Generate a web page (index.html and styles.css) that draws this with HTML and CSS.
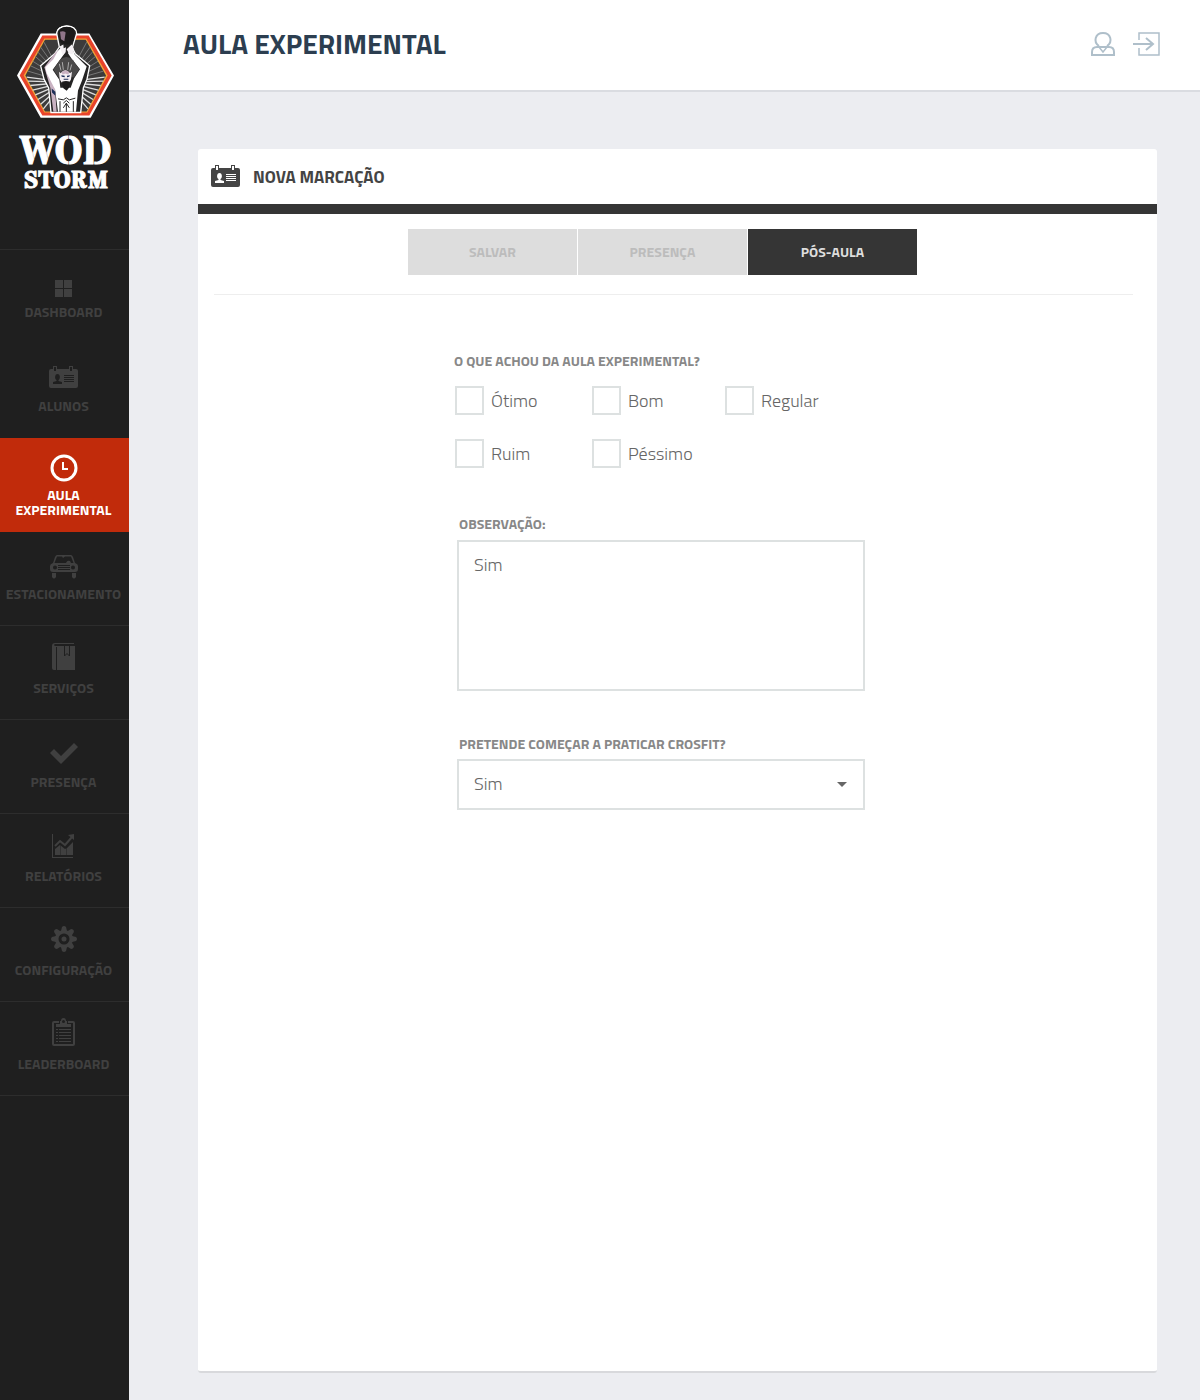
FILE: index.html
```html
<!DOCTYPE html>
<html lang="pt-BR">
<head>
<meta charset="utf-8">
<meta name="viewport" content="width=device-width, initial-scale=1">
<title>Aula Experimental - WOD Storm</title>
<link rel="stylesheet" href="styles.css">
</head>
<body>
<svg class="sprite" aria-hidden="true">
  <symbol id="badge" viewBox="0 0 29 22">
    <path fill="currentColor" fill-rule="evenodd" d="M2 3H4V0H8V3H20V0H24V3H27Q29 3 29 5V20Q29 22 27 22H2Q0 22 0 20V5Q0 3 2 3ZM5 1V5H7V1ZM21 1V5H23V1ZM8.500 8C5.500 8 5.500 13 7.500 14V15L4 16V18H13V16L9.500 15V14C11.500 13 11.500 8 8.500 8ZM15 9V10H25V9ZM15 11V12H25V11ZM15 13V14H25V13ZM15 15V16H25V15Z"/>
  </symbol>
</svg>
<div class="app">
  <aside class="sidebar">
    <a class="brand" href="#" aria-label="WOD Storm">
      <svg class="emblem" viewBox="51 44 291 278" width="97" height="93" aria-hidden="true">
        <path fill="#fff" d="M122 69H168Q170 46 200 44Q230 46 230 69H268L342 195L272 322H122L51 195Z"/>
        <path fill="#e8432b" d="M127 75H266L335 195L268 315H127L59 195Z"/>
        <path fill="#f3a536" d="M133 84H259L323 195L262 306H133L71 195Z"/>
        <path fill="#3c3b3b" d="M135 88H257L318 195L260 303H135L76 195Z"/>
        <g stroke="#777" stroke-width="3">
          <path d="M196 215L84 182M196 215L92 166M196 215L98 152M196 215L106 138M196 215L113 124M196 215L122 110M196 215L132 95M196 215L310 182M196 215L302 166M196 215L294 152M196 215L286 138M196 215L278 124M196 215L270 110M196 215L260 95"/>
          <path stroke="#ddd" stroke-width="4" d="M196 215L80 200M196 215L84 212M196 215L91 225M196 215L98 239M196 215L106 253M196 215L114 267M196 215L122 281M196 215L130 295M196 215L314 200M196 215L310 212M196 215L302 225M196 215L295 239M196 215L287 253M196 215L279 267M196 215L272 281M196 215L264 295"/>
        </g>
        <path fill="#252424" stroke="#fff" stroke-width="4" d="M164 130L122 166L132 206L146 232L153 306H242L250 232L261 206L269 166L226 130L217 112L230 69Q228 47 200 47Q172 49 170 69L178 110Z"/>
        <path fill="#c9b2c2" d="M166 126L186 112L190 130L172 150L152 180L163 210L170 304H160L151 232L133 170Z"/>
        <path fill="#fff" d="M172 124L186 108L194 128L180 148L158 178L178 208L181 232H212L222 204L240 176L216 146L204 128L216 110L224 132L260 168L246 210L234 240L228 304H174L165 236L140 188L136 170L160 146Z"/>
        <path fill="#4a4949" d="M180 148Q200 130 219 149L238 176L222 200H176L160 178Z"/>
        <path stroke="#ddd" stroke-width="2" d="M183 180L178 160M190 178L187 155M203 178L206 155M210 180L215 162"/>
        <path fill="#f4eff2" d="M177 184L182 188Q196 170 210 188L216 184L213 206L208 216H185L179 206Z"/>
        <path fill="#c9b2c2" d="M184 186Q197 174 208 186L205 192L196 189L188 192Z"/>
        <path fill="#1c2f58" d="M184 194L194 196V200L185 199ZM201 196L210 194L208 199L201 200ZM191 205H205V208H191ZM155 234L166 244L166 256L156 246Z"/>
        <path fill="#1b1a1a" d="M186 214Q198 209 210 214L207 232L200 241L190 233ZM177 66Q178 50 200 49Q223 50 224 66L221 90L209 102H188L180 94Z"/>
        <path fill="#8f7589" d="M180 64Q190 60 197 66L193 92L183 86Z"/>
        <path fill="#f4f0f3" d="M179 108L190 102L191 113L198 110L197 125L188 134ZM208 109L215 102L221 113L218 132L206 128L200 116Z"/>
        <path fill="none" stroke="#252424" stroke-width="3" d="M174 265L190 268L199 262L208 268L226 263M190 278L199 270L208 278M190 292L199 278L208 292M199 278V304M180 272V304M220 272V304"/>
      </svg>
      <svg class="wordmark" viewBox="0 0 97 58" width="97" height="58" aria-hidden="true">
        <text class="word-top" x="49" y="32" text-anchor="middle">WOD</text>
        <text class="word-bottom" x="49" y="56" text-anchor="middle">STORM</text>
      </svg>
    </a>
    <nav class="menu">
      <a href="#" class="item plain low"><span class="icon"><svg width="17" height="17" viewBox="0 0 17 17"><path fill="currentColor" d="M0 0H8V8H0ZM9 0H17V8H9ZM0 9H8V17H0ZM9 9H17V17H9Z"/></svg></span>DASHBOARD</a>
      <a href="#" class="item plain"><span class="icon"><svg width="29" height="22"><use href="#badge"/></svg></span>ALUNOS</a>
      <a href="#" class="item active" aria-current="page"><span class="icon"><svg width="28" height="28" viewBox="0 0 28 28"><g fill="none" stroke="currentColor" stroke-width="3"><circle cx="14" cy="14" r="12"/><path stroke-width="2" d="M13 8V15H18"/></g></svg></span>AULA EXPERIMENTAL</a>
      <a href="#" class="item low"><span class="icon"><svg width="28" height="24" viewBox="0 0 28 24"><path fill="currentColor" fill-rule="evenodd" d="M7 0H21Q22 0 23 2L25 8Q28 9 28 11V14Q28 17 25 17H3Q0 17 0 14V11Q0 9 3 8L5 2Q6 0 7 0ZM7 1.500L4.500 8H16Q17 5 20 6L21 8H23.500L21 1.500H15L13 3L12 1.500ZM5 10.500A2 2 0 1 0 5 14.500A2 2 0 1 0 5 10.500ZM23 10.500A2 2 0 1 0 23 14.500A2 2 0 1 0 23 10.500ZM8 10V11H20V10ZM8 12V13H20V12ZM8 14V15H20V14ZM2 18H6V22Q4 25 2 22ZM22 18H26V22Q24 25 22 22Z"/></svg></span>ESTACIONAMENTO</a>
      <a href="#" class="item"><span class="icon"><svg width="23" height="27" viewBox="0 0 23 27"><path fill="currentColor" d="M3 0H22V1H3Q1 2 3 3H23V27H5V4H4V27H2Q0 27 0 25V3Q0 0 3 0Z"/><path fill="none" stroke="#1f1f1f" d="M12.500 3V13L15 10.500L17.500 13V3"/></svg></span>SERVIÇOS</a>
      <a href="#" class="item"><span class="icon"><svg width="28" height="21" viewBox="0 0 28 21"><path fill="currentColor" d="M0 10L4 6L11 13L24 0L28 4L11 21Z"/></svg></span>PRESENÇA</a>
      <a href="#" class="item"><span class="icon"><svg width="23" height="24" viewBox="0 0 23 24"><path fill="currentColor" d="M0 0H1V23H21V24H0ZM3 15L8 11L13 15L15 14L21 8V21H3Z"/><path stroke="#1f1f1f" stroke-opacity=".5" d="M8.500 10V21M14.500 10V21"/><path fill="none" stroke="currentColor" stroke-width="2" d="M3 12L8 7L13 11L20 3"/><path fill="currentColor" d="M16 1L22 0V6Z"/></svg></span>RELATÓRIOS</a>
      <a href="#" class="item"><span class="icon"><svg width="26" height="26" viewBox="-13 -13 26 26"><g fill="currentColor"><circle r="9"/><path id="cog" d="M-3 -8L-2 -12Q0 -14 2 -12L3 -8V8L2 12Q0 14 -2 12L-3 8Z"/><use href="#cog" transform="rotate(45)"/><use href="#cog" transform="rotate(90)"/><use href="#cog" transform="rotate(135)"/></g><circle r="4" fill="none" stroke="#1f1f1f" stroke-width="3"/></svg></span>CONFIGURAÇÃO</a>
      <a href="#" class="item"><span class="icon"><svg width="23" height="28" viewBox="0 0 23 28"><path fill="currentColor" fill-rule="evenodd" d="M2 3H7V5H2V26H21V5H16V3H21Q23 3 23 5V26Q23 28 21 28H2Q0 28 0 26V5Q0 3 2 3ZM9 3Q9 0 11.500 0Q14 0 14 3H15V6H19V9H4V6H8V3ZM11.500 2A1 1 0 1 0 11.500 5A1 1 0 1 0 11.500 2Z"/><path stroke="currentColor" d="M4 11.500H6M7 11.500H19M4 14.500H6M7 14.500H19M4 17.500H6M7 17.500H19M4 20.500H6M7 20.500H19M4 23.500H6M7 23.500H19"/></svg></span>LEADERBOARD</a>
    </nav>
  </aside>
  <div class="main">
    <header class="topbar">
      <h1>AULA EXPERIMENTAL</h1>
      <div class="actions">
        <a href="#" aria-label="Perfil"><svg width="24" height="24" viewBox="0 0 24 24" fill="none" stroke="currentColor" stroke-width="2"><path d="M8 14C2 10 4 1 12 1S22 10 16 14M1 23V20Q1 15 6 15H18Q23 15 23 20V23Z"/><path stroke-width="1.500" d="M8 15L12 20L16 15"/></svg></a>
        <a href="#" aria-label="Sair"><svg width="27" height="24" viewBox="0 0 27 24" fill="none" stroke="currentColor"><path stroke-width="1.500" d="M6 8V1H26V23H6V16"/><path stroke-width="2" d="M0 12H20M13 6L20 12L13 18"/></svg></a>
      </div>
    </header>
    <main class="card">
      <div class="card-head">
        <svg width="29" height="22" aria-hidden="true"><use href="#badge"/></svg>
        <h2>NOVA MARCAÇÃO</h2>
      </div>
      <div class="card-body">
        <div class="tabs">
          <button type="button">SALVAR</button>
          <button type="button">PRESENÇA</button>
          <button type="button" class="current">PÓS-AULA</button>
        </div>
        <form class="form">
          <fieldset>
            <legend>O QUE ACHOU DA AULA EXPERIMENTAL?</legend>
            <div class="options">
              <label><input type="checkbox" name="nota" value="otimo">Ótimo</label>
              <label><input type="checkbox" name="nota" value="bom">Bom</label>
              <label><input type="checkbox" name="nota" value="regular">Regular</label>
              <label><input type="checkbox" name="nota" value="ruim">Ruim</label>
              <label><input type="checkbox" name="nota" value="pessimo">Péssimo</label>
            </div>
          </fieldset>
          <div class="field">
            <label for="obs">OBSERVAÇÃO:</label>
            <textarea id="obs">Sim</textarea>
          </div>
          <div class="field">
            <label for="praticar">PRETENDE COMEÇAR A PRATICAR CROSFIT?</label>
            <div class="select">
              <select id="praticar"><option>Sim</option><option>Não</option></select>
              <svg width="10" height="5" viewBox="0 0 10 5" aria-hidden="true"><path fill="#666" d="M0 0H10L5 5Z"/></svg>
            </div>
          </div>
        </form>
      </div>
    </main>
  </div>
</div>
</body>
</html>
```
FILE: styles.css
```css
*, *::before, *::after { box-sizing: border-box; }

body {
  margin: 0;
  background: #ecedf1;
  color: #666;
  font-family: "Titillium Web", Roboto, sans-serif;
}

a { color: inherit; text-decoration: none; }
svg { display: block; flex: none; }
button, textarea, select { font: inherit; color: inherit; }

.sprite { display: none; }
.app { display: flex; min-height: 100vh; }

/* Sidebar */
.sidebar { flex: 0 0 129px; background: #1f1f1f; }

.brand {
  display: flex;
  flex-direction: column;
  align-items: center;
  gap: 14px;
  height: 250px;
  padding: 25px 0 0 2px;
  border-bottom: 1px solid #2d2d2d;
}

.wordmark { overflow: visible; }
.wordmark text {
  fill: #fff;
  stroke: #fff;
  stroke-width: 1px;
  font-family: "Stardos Stencil", "DejaVu Serif Condensed", "DejaVu Serif", serif;
  font-weight: 700;
}
.wordmark .word-top { font-size: 39px; }
.wordmark .word-bottom { font-size: 24px; }

.item {
  display: flex;
  flex-direction: column;
  align-items: center;
  gap: 10px;
  height: 94px;
  padding: 15px 2px 0 0;
  border-bottom: 1px solid #2d2d2d;
  color: #404040;
  font-size: 14px;
  font-weight: 700;
  line-height: 15px;
  text-align: center;
}
.item .icon { display: flex; align-items: flex-end; height: 29px; }
.item.plain { border-color: transparent; }
.item.low { gap: 7px; }
.item.low .icon { height: 32px; }
.item.active {
  gap: 5px;
  border-bottom: 0;
  background: #c12b0b;
  color: #fff;
}

/* Header */
.main { display: flex; flex: 1; flex-direction: column; min-width: 0; }

.topbar {
  display: flex;
  align-items: center;
  justify-content: space-between;
  height: 92px;
  padding: 0 40px 2px 54px;
  border-bottom: 2px solid #dadce1;
  background: #fff;
}
.topbar h1 {
  margin: 0;
  color: #2c3e50;
  font-size: 28px;
  font-weight: 700;
  line-height: 32px;
}
.actions { display: flex; gap: 18px; color: #afbfca; }

/* Card */
.card {
  flex: 1;
  margin: 57px 43px 27px 69px;
  border-bottom: 2px solid #d8d9dc;
  border-radius: 3px;
  background: #fff;
}
.card-head {
  display: flex;
  align-items: center;
  gap: 13px;
  height: 65px;
  padding: 0 13px 2px;
  border-bottom: 10px solid #353535;
  color: #444;
}
.card-head h2 {
  margin: 0;
  padding-top: 2px;
  font-size: 17px;
  font-weight: 700;
  line-height: 20px;
}
.card-body { padding: 0 24px 0 16px; }

.tabs {
  display: flex;
  justify-content: center;
  gap: 1px;
  padding: 15px 22px 19px 0;
  border-bottom: 1px solid #eee;
}
.tabs button {
  flex: 0 1 169px;
  height: 46px;
  padding: 0 0 2px;
  border: 0;
  background: #ddd;
  color: #bcbcbc;
  font-size: 14px;
  font-weight: 700;
}
.tabs .current { background: #353535; color: #ddd; }

/* Form */
.form {
  max-width: 439px;
  margin: 0 auto;
  padding: 57px 28px 0 0;
  font-size: 18px;
  font-weight: 300;
}
fieldset { margin: 0; padding: 0 0 3px; border: 0; }
legend, .field > label {
  display: block;
  padding: 0;
  color: #888;
  font-size: 14px;
  font-weight: 700;
  line-height: 18px;
}
.options {
  display: grid;
  grid-template-columns: 137px 133px 1fr;
  row-gap: 24px;
  padding: 16px 0 0 1px;
}
.options label { display: flex; align-items: center; gap: 7px; }
.options input {
  flex: none;
  width: 29px;
  height: 29px;
  margin: 0;
  border: 2px solid #dde1e1;
  background: #fff;
  appearance: none;
}
.options input:checked { background: #c12b0b; }

.field { padding: 44px 0 0 3px; }
.field > label { padding-left: 2px; }
textarea, select {
  display: block;
  width: 100%;
  margin: 0;
  border: 2px solid #dde1e1;
  border-radius: 0;
  background: #fff;
  appearance: none;
}
textarea {
  height: 151px;
  margin-top: 7px;
  padding: 11px 15px;
  line-height: 24px;
  resize: none;
}
.select { position: relative; margin-top: 6px; }
.select select { height: 51px; padding: 0 15px 2px; }
.select svg {
  position: absolute;
  top: 23px;
  right: 18px;
  pointer-events: none;
}
```
